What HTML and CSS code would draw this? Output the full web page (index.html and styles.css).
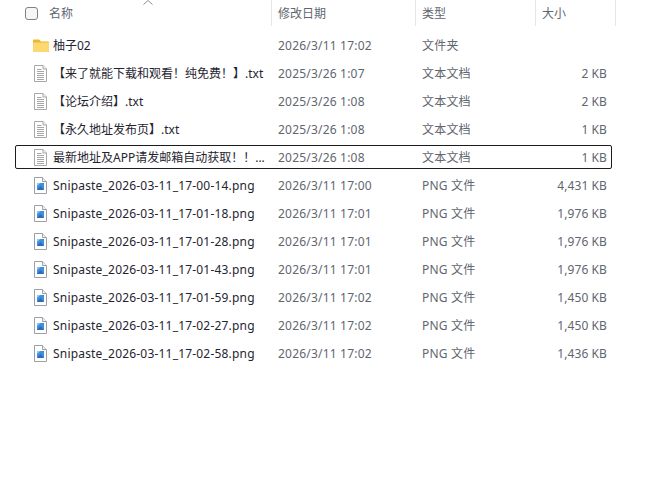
FILE: index.html
```html
<!DOCTYPE html>
<html lang="zh">
<head>
<meta charset="utf-8">
<title>文件列表</title>
<link rel="stylesheet" href="styles.css">
</head>
<body>
<svg class="defs" width="0" height="0" aria-hidden="true">
  <defs>
    <symbol id="txt" viewBox="0 0 13 17">
      <path d="M.5 .5H9L12.500 4V16.500H.5Z" fill="#fff" stroke="#a8a8a8"/>
      <path d="M9 .5V4H12.500" fill="#f2f2f2" stroke="#a8a8a8"/>
      <path d="M3 4.500H7.500M3 6.500H10M3 8.500H10M3 10.500H10M3 12.500H10M3 14.500H10" stroke="#a6a6a6" fill="none"/>
    </symbol>
    <symbol id="png" viewBox="0 0 13 17">
      <path d="M.5 .5H8.500L12.500 4.500V16.500H.5Z" fill="#fff" stroke="#9aa0a6"/>
      <path d="M8.500 .5V4.500H12.500" fill="#f4f4f4" stroke="#9aa0a6"/>
      <rect x="3" y="6" width="7" height="7" fill="#3f8fdc"/>
      <path d="M3 13L6.500 9L10 13Z" fill="#2a6cba"/>
      <path d="M3 6H6.500L3 9Z" fill="#8cc8f4"/>
    </symbol>
  </defs>
</svg>
<div class="sort-arrow"><svg width="10" height="5" viewBox="0 0 10 5"><path d="M.5 4.500L5 .5L9.500 4.500" fill="none" stroke="#8a8f96"/></svg></div>
<header class="head">
  <div class="head-name"><span class="check"></span><span>名称</span></div>
  <div class="head-cell">修改日期</div>
  <div class="head-cell">类型</div>
  <div class="head-cell">大小</div>
</header>
<main class="list">
  <div class="row">
    <div class="name name-folder">
      <svg class="folder" width="16" height="13" viewBox="0 0 16 13"><path d="M0 1.500a1 1 0 0 1 1-1H6L8 2.500H15a1 1 0 0 1 1 1V12a1 1 0 0 1-1 1H1a1 1 0 0 1-1-1Z" fill="#eeb52f"/><path d="M0 4.500a1 1 0 0 1 1-1H15a1 1 0 0 1 1 1V12a1 1 0 0 1-1 1H1a1 1 0 0 1-1-1Z" fill="#fcd96e"/></svg>
      <span>柚子02</span>
    </div>
    <div class="cell">2026/3/11 17:02</div><div class="cell">文件夹</div><div class="size"></div>
  </div>
  <div class="row">
    <div class="name"><svg class="icon"><use href="#txt"/></svg><span>【来了就能下载和观看！纯免费！】.txt</span></div>
    <div class="cell">2025/3/26 1:07</div><div class="cell">文本文档</div><div class="size">2 KB</div>
  </div>
  <div class="row">
    <div class="name"><svg class="icon"><use href="#txt"/></svg><span>【论坛介绍】.txt</span></div>
    <div class="cell">2025/3/26 1:08</div><div class="cell">文本文档</div><div class="size">2 KB</div>
  </div>
  <div class="row">
    <div class="name"><svg class="icon"><use href="#txt"/></svg><span>【永久地址发布页】.txt</span></div>
    <div class="cell">2025/3/26 1:08</div><div class="cell">文本文档</div><div class="size">1 KB</div>
  </div>
  <div class="row row-focus">
    <div class="name"><svg class="icon"><use href="#txt"/></svg><span>最新地址及APP请发邮箱自动获取！！...</span></div>
    <div class="cell">2025/3/26 1:08</div><div class="cell">文本文档</div><div class="size">1 KB</div>
  </div>
  <div class="row">
    <div class="name name-png"><svg class="icon"><use href="#png"/></svg><span>Snipaste_2026-03-11_17-00-14.png</span></div>
    <div class="cell">2026/3/11 17:00</div><div class="cell">PNG 文件</div><div class="size">4,431 KB</div>
  </div>
  <div class="row">
    <div class="name name-png"><svg class="icon"><use href="#png"/></svg><span>Snipaste_2026-03-11_17-01-18.png</span></div>
    <div class="cell">2026/3/11 17:01</div><div class="cell">PNG 文件</div><div class="size">1,976 KB</div>
  </div>
  <div class="row">
    <div class="name name-png"><svg class="icon"><use href="#png"/></svg><span>Snipaste_2026-03-11_17-01-28.png</span></div>
    <div class="cell">2026/3/11 17:01</div><div class="cell">PNG 文件</div><div class="size">1,976 KB</div>
  </div>
  <div class="row">
    <div class="name name-png"><svg class="icon"><use href="#png"/></svg><span>Snipaste_2026-03-11_17-01-43.png</span></div>
    <div class="cell">2026/3/11 17:01</div><div class="cell">PNG 文件</div><div class="size">1,976 KB</div>
  </div>
  <div class="row">
    <div class="name name-png"><svg class="icon"><use href="#png"/></svg><span>Snipaste_2026-03-11_17-01-59.png</span></div>
    <div class="cell">2026/3/11 17:02</div><div class="cell">PNG 文件</div><div class="size">1,450 KB</div>
  </div>
  <div class="row">
    <div class="name name-png"><svg class="icon"><use href="#png"/></svg><span>Snipaste_2026-03-11_17-02-27.png</span></div>
    <div class="cell">2026/3/11 17:02</div><div class="cell">PNG 文件</div><div class="size">1,450 KB</div>
  </div>
  <div class="row">
    <div class="name name-png"><svg class="icon"><use href="#png"/></svg><span>Snipaste_2026-03-11_17-02-58.png</span></div>
    <div class="cell">2026/3/11 17:02</div><div class="cell">PNG 文件</div><div class="size">1,436 KB</div>
  </div>
</main>
</body>
</html>
```
FILE: styles.css
```css
* { box-sizing: border-box; }
html, body { margin: 0; background: #fff; }
body {
  position: relative;
  width: 669px;
  height: 494px;
  overflow: hidden;
  font-family: "Noto Sans", "Noto Sans CJK SC", sans-serif;
  font-size: 12px;
  color: #2f3440;
}
.defs { position: absolute; }
.sort-arrow { position: absolute; left: 143px; top: 0; line-height: 0; }
.head {
  display: grid;
  grid-template-columns: 272px 144px 120px 80px;
  height: 26px;
  margin-bottom: 7px;
  color: #5f6670;
}
.head-name { display: flex; align-items: center; gap: 11px; padding-left: 25px; border-right: 1px solid #e6e6e6; }
.head-cell { display: flex; align-items: center; padding-left: 6px; border-right: 1px solid #e6e6e6; }
.check {
  width: 13px;
  height: 13px;
  border: 1px solid #7d8289;
  border-radius: 3px;
  background: #f6f6f6;
}
.list { display: flex; flex-direction: column; gap: 4px; padding-left: 15px; width: 612px; }
.row {
  display: grid;
  grid-template-columns: 262px 144px 120px 65px;
  align-items: center;
  height: 24px;
  border: 1px solid transparent;
  border-radius: 2px;
}
.row-focus { border-color: #1c1c1c; }
.name { display: flex; align-items: center; gap: 6px; padding-left: 18px; white-space: nowrap; color: #1f2530; }
.name-folder { padding-left: 17px; gap: 4px; }
.name-png { letter-spacing: .19px; }
.icon { width: 13px; height: 17px; flex: none; }
.folder { flex: none; }
.cell { color: #5f6670; letter-spacing: .2px; }
.size { color: #5f6670; text-align: right; letter-spacing: .1px; }
```
